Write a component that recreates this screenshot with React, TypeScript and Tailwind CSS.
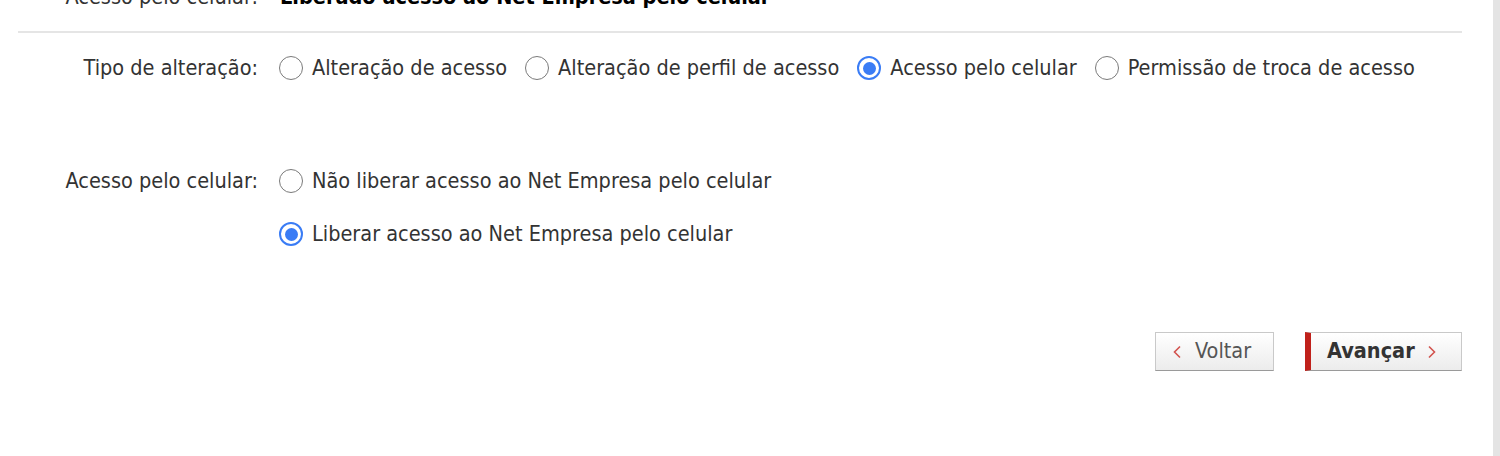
import React from "react";

const font = {
  fontFamily: '"DejaVu Sans Condensed", "DejaVu Sans", Tahoma, sans-serif',
};

const Radio = ({ checked }: { checked?: boolean }) =>
  checked ? (
    <span className="flex h-6 w-6 shrink-0 items-center justify-center rounded-full border-[2.5px] border-[#3a7cf5] bg-white">
      <span className="h-[13px] w-[13px] rounded-full bg-[#3a7cf5]" />
    </span>
  ) : (
    <span className="h-6 w-6 shrink-0 rounded-full border-[1.5px] border-[#7a7a7a] bg-white" />
  );

const Option = ({ label, checked }: { label: string; checked?: boolean }) => (
  <label className="flex items-center gap-[9px] whitespace-nowrap">
    <Radio checked={checked} />
    <span>{label}</span>
  </label>
);

const Chevron = ({ dir }: { dir: "left" | "right" }) => (
  <svg width="10" height="14" viewBox="0 0 10 14" className="shrink-0">
    <polyline
      points={dir === "left" ? "8,1.5 2.5,7 8,12.5" : "2,1.5 7.5,7 2,12.5"}
      fill="none"
      stroke="#d2534e"
      strokeWidth="1.6"
    />
  </svg>
);

const tipos = [
  { label: "Alteração de acesso" },
  { label: "Alteração de perfil de acesso" },
  { label: "Acesso pelo celular", checked: true },
  { label: "Permissão de troca de acesso" },
];

export default function App() {
  return (
    <div className="flex h-[456px] w-[1500px] overflow-hidden bg-white text-[21.5px] text-[#333]" style={font}>
      <div className="flex-1 pl-[18px] pr-[31px]">
        {/* Resumo (cortado no topo) */}
        <div className="mt-[-17px] flex h-[28px] items-center leading-[28px]">
          <div className="w-[240px] shrink-0 text-right">Acesso pelo celular:</div>
          <div className="ml-[22px] font-bold text-black">Liberado acesso ao Net Empresa pelo celular</div>
        </div>
        <div className="mt-[20px] h-[2px] bg-[#e5e5e5]" />

        {/* Tipo de alteração */}
        <div className="mt-[21px] flex h-[28px] items-center leading-[28px]">
          <div className="w-[240px] shrink-0 text-right">Tipo de alteração:</div>
          <div className="ml-[21px] flex items-center gap-[18px]">
            {tipos.map((t) => (
              <Option key={t.label} label={t.label} checked={t.checked} />
            ))}
          </div>
        </div>

        {/* Acesso pelo celular */}
        <div className="mt-[85px] flex leading-[28px]">
          <div className="h-[28px] w-[240px] shrink-0 text-right">Acesso pelo celular:</div>
          <div className="ml-[21px] flex flex-col gap-[25px]">
            <Option label="Não liberar acesso ao Net Empresa pelo celular" />
            <Option label="Liberar acesso ao Net Empresa pelo celular" checked />
          </div>
        </div>

        {/* Botões */}
        <div className="mt-[84px] flex justify-end gap-[31px]">
          <button className="flex h-[39px] w-[119px] items-center gap-[13px] border border-[#c9c9c9] border-b-[#9a9a9a] bg-gradient-to-b from-white to-[#ececec] pl-[16px] text-[#555]">
            <Chevron dir="left" />
            <span>Voltar</span>
          </button>
          <button className="flex h-[39px] w-[157px] items-center gap-[12px] border border-[#c9c9c9] border-b-[#9a9a9a] border-l-[6px] border-l-[#c0211b] bg-gradient-to-b from-white to-[#ececec] pl-[16px] font-bold text-[#333]">
            <span>Avançar</span>
            <Chevron dir="right" />
          </button>
        </div>
      </div>
      <div className="h-full w-[7px] shrink-0 bg-[#e4e4e4]" />
    </div>
  );
}
